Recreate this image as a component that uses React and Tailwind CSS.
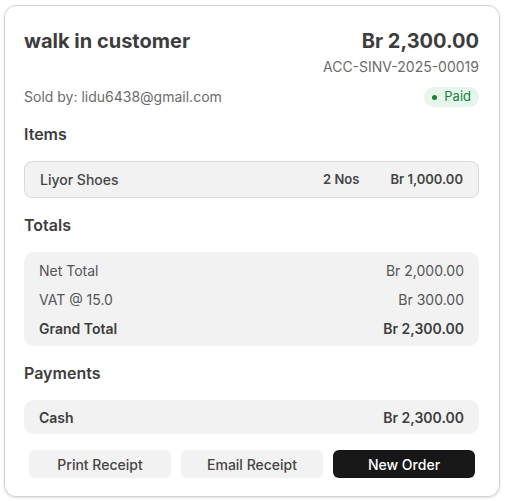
export default function App() {
  return (
    <div
      className="bg-white p-1 pt-[5px]"
      style={{ fontFamily: "Inter, 'Noto Sans', sans-serif" }}
    >
      <div className="w-[496px] h-[492px] rounded-xl border border-[#d4d4d4] bg-white pl-[19px] pr-[20px] pt-[21px] text-[#454545] shadow-sm">
        <div className="flex items-start justify-between">
          <h1 className="text-[20px] font-bold leading-[28px] text-[#3d3d3d]">walk in customer</h1>
          <div className="flex flex-col items-end">
            <div className="text-[20px] font-bold leading-[28px] text-[#3d3d3d]">Br 2,300.00</div>
            <div className="mt-[2px] text-[14px] leading-[20px] text-[#6b6b6b]">ACC-SINV-2025-00019</div>
          </div>
        </div>
        <div className="mt-[10px] flex items-center justify-between">
          <div className="text-[14px] leading-[20px] text-[#6b6b6b]">Sold by: lidu6438@gmail.com</div>
          <span className="flex h-[20px] items-center gap-[7px] rounded-full bg-[#e7f6ec] px-[8px] text-[13px] text-[#16803c]">
            <span className="h-[5px] w-[5px] rounded-full bg-[#16803c]" />
            Paid
          </span>
        </div>

        <h2 className="mt-[15px] text-[16px] font-semibold leading-[24px] text-[#3d3d3d]">Items</h2>
        <div className="mt-[15px] flex h-[37px] items-center rounded-lg border border-[#d9d9d9] bg-[#f2f2f2] pl-[15px] pr-[15px]">
          <span className="flex-1 text-[14px] font-medium text-[#454545]">Liyor Shoes</span>
          <span className="text-[13px] font-semibold text-[#454545]">2 Nos</span>
          <span className="ml-[31px] text-[13px] font-semibold text-[#454545]">Br 1,000.00</span>
        </div>

        <h2 className="mt-[15px] text-[16px] font-semibold leading-[24px] text-[#3d3d3d]">Totals</h2>
        <div className="mt-[15px] flex h-[94px] flex-col justify-center rounded-[10px] bg-[#f2f2f2] px-[15px] text-[14px]">
          <div className="flex h-[29px] items-center justify-between text-[#555]">
            <span>Net Total</span>
            <span>Br 2,000.00</span>
          </div>
          <div className="flex h-[29px] items-center justify-between text-[#555]">
            <span>VAT @ 15.0</span>
            <span>Br 300.00</span>
          </div>
          <div className="flex h-[29px] items-center justify-between font-semibold text-[#3d3d3d]">
            <span>Grand Total</span>
            <span>Br 2,300.00</span>
          </div>
        </div>

        <h2 className="mt-[15px] text-[16px] font-semibold leading-[24px] text-[#3d3d3d]">Payments</h2>
        <div className="mt-[15px] flex h-[34px] items-center justify-between rounded-[10px] bg-[#f2f2f2] px-[15px] text-[14px] font-semibold text-[#3d3d3d]">
          <span>Cash</span>
          <span>Br 2,300.00</span>
        </div>

        <div className="mt-[16px] flex gap-[10px] pl-[5px] pr-[4px]">
          <button className="h-[28px] flex-1 rounded-md bg-[#f2f2f2] text-[14px] font-medium text-[#454545]">Print Receipt</button>
          <button className="h-[28px] flex-1 rounded-md bg-[#f2f2f2] text-[14px] font-medium text-[#454545]">Email Receipt</button>
          <button className="h-[28px] flex-1 rounded-md bg-[#171717] text-[14px] font-medium text-white">New Order</button>
        </div>
      </div>
    </div>
  );
}
